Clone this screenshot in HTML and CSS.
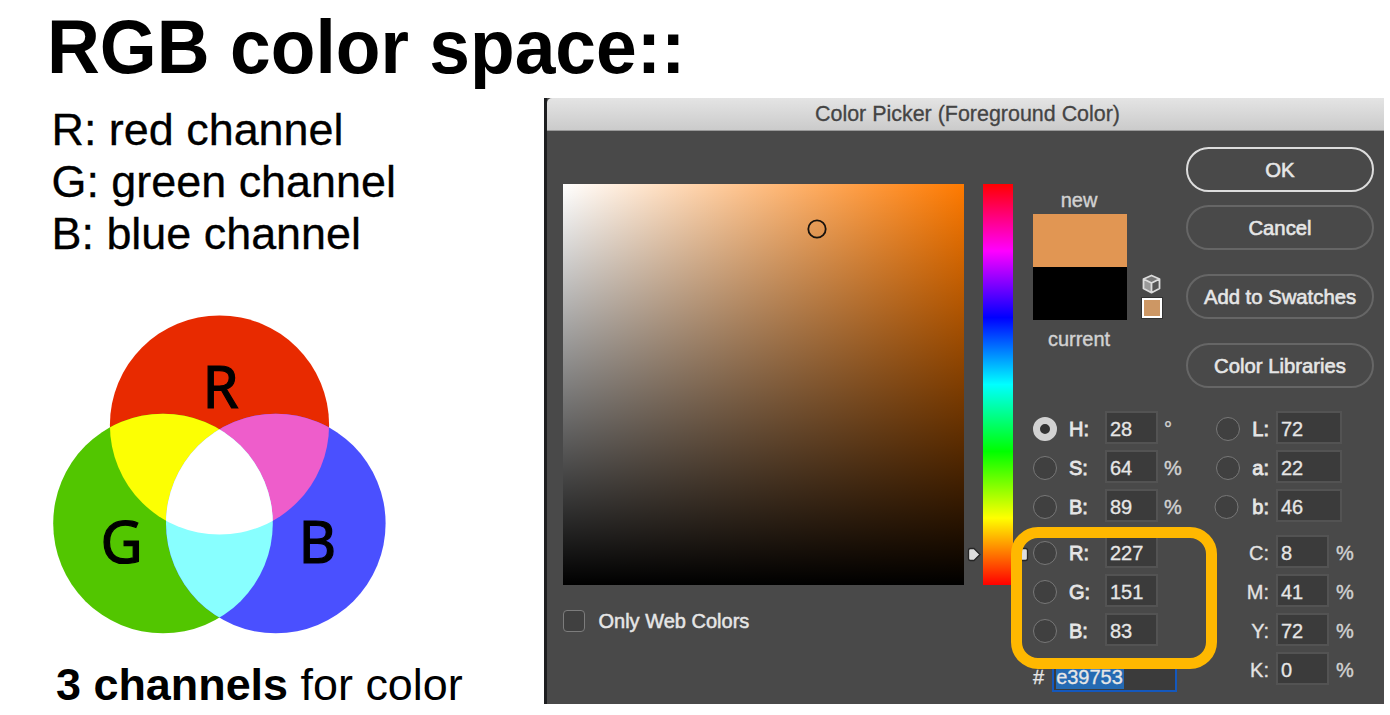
FILE: index.html
```html
<!DOCTYPE html>
<html lang="en">
<head>
<meta charset="utf-8">
<title>RGB color space</title>
<link rel="stylesheet" href="styles.css">
</head>
<body>
<main class="slide">
  <h1 class="title">RGB color space::</h1>

  <section class="notes">
    <ul class="channels">
      <li>R: red channel</li>
      <li>G: green channel</li>
      <li>B: blue channel</li>
    </ul>
    <svg class="venn" width="360" height="350" viewBox="40 300 360 350">
      <defs>
        <clipPath id="in-red"><circle cx="219.5" cy="425" r="109.6"/></clipPath>
        <clipPath id="in-green"><circle cx="163" cy="523.5" r="109.8"/></clipPath>
      </defs>
      <circle cx="219.5" cy="425" r="109.6" fill="#e82a00"/>
      <circle cx="163" cy="523.5" r="109.8" fill="#52c600"/>
      <circle cx="275.8" cy="523.5" r="109.8" fill="#4a50ff"/>
      <circle cx="163" cy="523.5" r="109.8" fill="#fcff03" clip-path="url(#in-red)"/>
      <circle cx="275.8" cy="523.5" r="109.8" fill="#ee5dcb" clip-path="url(#in-red)"/>
      <g clip-path="url(#in-green)">
        <circle cx="275.8" cy="523.5" r="109.8" fill="#88ffff"/>
        <g clip-path="url(#in-red)"><circle cx="275.8" cy="523.5" r="109.8" fill="#fff"/></g>
      </g>
      <text class="venn-label" x="202.5" y="408">R</text>
      <text class="venn-label" x="100.5" y="562.5">G</text>
      <text class="venn-label" x="298.5" y="562.5">B</text>
    </svg>
    <p class="caption"><b>3 channels</b> for color</p>
  </section>

  <section class="picker">
    <header class="picker-bar">Color Picker (Foreground Color)</header>
    <div class="picker-body">
      <div class="field-col">
        <div class="field">
          <svg class="ring" width="20" height="20" viewBox="0 0 20 20"><circle cx="10" cy="10" r="8.7" fill="none" stroke="#17120d" stroke-width="1.8"/></svg>
        </div>
        <div class="web-only"><span class="checkbox"></span>Only Web Colors</div>
      </div>
      <div class="hue">
        <svg class="arrow arrow-left" width="15" height="15" viewBox="0 0 15 15"><path d="M3.500 1.500h3.500l6 6-6 6H3.500q-2 0-2-2v-8q0-2 2-2z" fill="#dedede" stroke="#262626" stroke-width="1.300"/></svg>
        <svg class="arrow arrow-right" width="15" height="15" viewBox="0 0 15 15"><path d="M11.500 1.500H8l-6 6 6 6h3.500q2 0 2-2v-8q0-2-2-2z" fill="#dedede" stroke="#262626" stroke-width="1.300"/></svg>
      </div>
      <div class="side">
        <div class="side-top">
          <div class="preview">
            <span>new</span>
            <div class="swatch-new"></div>
            <div class="swatch-current"></div>
            <span class="current-label">current</span>
          </div>
          <div class="websafe">
            <svg width="20" height="20" viewBox="0 0 20 20"><path d="M9.500 1.500l8 3.500v9.500l-8 4.200-8-4.200V5z" fill="#777"/><path d="M9.500 9l8-4v9.500l-8 4.200z" fill="#555"/><path d="M1.500 5l8 4v9.700l-8-4.200z" fill="#999"/><path d="M9.500 1.500l8 3.500v9.500l-8 4.200-8-4.200V5zM1.500 5l8 4 8-4M9.500 9v9.700" fill="none" stroke="#dcdcdc" stroke-width="1.800" stroke-linejoin="round"/></svg>
            <span class="websafe-chip"></span>
          </div>
          <div class="buttons">
            <div class="btn primary">OK</div>
            <div class="btn">Cancel</div>
            <div class="btn spaced">Add to Swatches</div>
            <div class="btn spaced">Color Libraries</div>
          </div>
        </div>
        <div class="values">
          <div class="group left">
            <div class="row"><i class="radio on"></i><b>H:</b><span class="box">28</span><em>°</em></div>
            <div class="row"><i class="radio"></i><b>S:</b><span class="box">64</span><em>%</em></div>
            <div class="row"><i class="radio"></i><b>B:</b><span class="box">89</span><em>%</em></div>
            <div class="row split"><i class="radio"></i><b>R:</b><span class="box">227</span></div>
            <div class="row"><i class="radio"></i><b>G:</b><span class="box">151</span></div>
            <div class="row"><i class="radio"></i><b>B:</b><span class="box">83</span></div>
            <div class="hex"><span>#</span><span class="hex-box"><mark>e39753</mark></span></div>
            <div class="highlight"></div>
          </div>
          <div class="group right">
            <div class="row"><i class="radio"></i><b>L:</b><span class="box wide">72</span></div>
            <div class="row"><i class="radio"></i><b>a:</b><span class="box wide">22</span></div>
            <div class="row"><i class="radio nudge"></i><b>b:</b><span class="box wide">46</span></div>
            <div class="row split"><i></i><b class="plain">C:</b><span class="box">8</span><em>%</em></div>
            <div class="row"><i></i><b class="plain">M:</b><span class="box">41</span><em>%</em></div>
            <div class="row"><i></i><b class="plain">Y:</b><span class="box">72</span><em>%</em></div>
            <div class="row"><i></i><b class="plain">K:</b><span class="box">0</span><em>%</em></div>
          </div>
        </div>
      </div>
    </div>
  </section>
</main>
</body>
</html>
```
FILE: styles.css
```css
* { box-sizing: border-box; }
body {
  margin: 0;
  background: #fff;
  color: #000;
  font-family: "Liberation Sans", Arial, sans-serif;
}
.slide {
  display: grid;
  grid-template-columns: 544px 840px;
  grid-template-rows: 98px 606px;
  width: 1390px;
  height: 715px;
  overflow: hidden;
}
.title {
  grid-column: 1 / 3;
  margin: 0;
  padding: 6px 0 0 47px;
  font-size: 73.200px;
  line-height: 84px;
  white-space: nowrap;
  transform: scaleY(1.03);
  transform-origin: 0 73px;
}
.notes { padding-top: 5.500px; }
.channels {
  margin: 0;
  padding: 0 0 0 51.500px;
  list-style: none;
  font-size: 44.900px;
  line-height: 52px;
  -webkit-text-stroke: .3px #000;
}
.venn { display: block; margin: 40.500px 0 0 40px; }
.venn-label { font: 58px "Noto Sans", sans-serif; stroke: #000; stroke-width: 1.200px; }
.caption {
  margin: 8.500px 0 0 56px;
  font-size: 44.900px;
  line-height: 52px;
  white-space: nowrap;
}

.picker {
  height: 606px;
  border-left: 3px solid #1d1e20;
  background: #494949;
  color: #e6e6e6;
  font-size: 20px;
}
.picker-bar {
  height: 33px;
  padding-left: 4px;
  border-bottom: 1px solid #999;
  border-radius: 5px 0 0 0;
  background: linear-gradient(#e4e4e4, #cbcbcb);
  color: #444;
  font-size: 21.450px;
  line-height: 33px;
  text-align: center;
  -webkit-text-stroke: .3px #444;
}
.picker-body { display: flex; padding: 16px 0 0 16px; height: 573px; }
.field-col { width: 401px; padding-top: 37px; }
.field {
  position: relative;
  height: 401px;
  background: linear-gradient(transparent, #000), linear-gradient(90deg, #fff, #ff7a00);
}
.ring { position: absolute; left: 244px; top: 35px; }
.web-only {
  display: flex;
  align-items: center;
  gap: 13.500px;
  margin-top: 25px;
  height: 22px;
  padding-top: 1px;
  -webkit-text-stroke: .5px #e6e6e6;
}
.checkbox { width: 22px; height: 22px; margin-top: -1px; border: 1.500px solid #7c7c7c; border-radius: 4px; background: #404040; }
.hue {
  position: relative;
  width: 30px;
  height: 401px;
  margin: 37px 20px 0 19px;
  background: linear-gradient(#f00, #f0f 16.700%, #00f 33.300%, #0ff 50%, #0f0 66.700%, #ff0 83.300%, #f00);
}
.arrow { position: absolute; top: 363px; }
.arrow-left { left: -16px; }
.arrow-right { left: 31px; }

.side { width: 342px; }
.side-top { display: flex; height: 264px; }
.preview { width: 94px; padding-top: 41px; text-align: center; line-height: 24px; color: #d2d2d2; }
.preview span { display: block; height: 26px; margin-left: -2px; -webkit-text-stroke: .4px #d2d2d2; }
.swatch-new { height: 53px; background: #e19653; }
.swatch-current { height: 53px; background: #000; }
.preview .current-label { padding-top: 7px; }
.websafe { display: flex; flex-direction: column; width: 20px; margin: 127px 24.500px 0 15px; gap: 4px; }
.websafe-chip { width: 20px; height: 20px; border: 2px solid #fff; outline: 1px solid #333; background: #cd9764; }
.buttons { display: flex; flex-direction: column; width: 188px; margin-left: -.500px; }
.btn {
  height: 45px;
  margin-bottom: 13.300px;
  border: 2px solid #666;
  border-radius: 23px;
  line-height: 42px;
  font-size: 20.300px;
  text-align: center;
  -webkit-text-stroke: .6px #e6e6e6;
}
.btn.primary { border-color: #ddd; }
.btn.spaced { margin-top: 10.500px; }

.values { display: flex; }
.group { position: relative; display: flex; flex-direction: column; }
.group.left { width: 182px; }
.row { display: grid; height: 39px; align-items: start; line-height: 37px; }
.left .row { grid-template-columns: 36px 36px 59px 40px; }
.right .row { grid-template-columns: 24px 30px 60px 20px; justify-content: start; }
.row.split { margin-top: 7px; }
.row b { font-weight: 400; -webkit-text-stroke: .8px #e6e6e6; }
.row b.plain { -webkit-text-stroke: .4px #d8d8d8; }
.right .row b { text-align: right; }
.right .box { margin-left: 7px; }
.row em { font-style: normal; color: #d2d2d2; -webkit-text-stroke: .4px #d2d2d2; }
.right .row em { margin-left: 7px; }
.radio {
  width: 24px;
  height: 24px;
  margin-top: 6px;
  border: 1.500px solid #777;
  border-radius: 50%;
  background: #404040;
}
.radio.on { border: 7px solid #d2d2d2; background: #333; }
.right .radio { transform: translateX(1px); }
.right .radio.nudge { transform: translateX(-.500px); }
.box {
  width: 53px;
  height: 33px;
  padding-left: 3px;
  border: 2px solid #535353;
  background: #3b3b3b;
  line-height: 33px;
  -webkit-text-stroke: .3px #e6e6e6;
}
.box.wide { width: 66px; }
.hex { display: flex; height: 33px; margin-top: 7px; gap: 8px; line-height: 36px; -webkit-text-stroke: .3px #e6e6e6; }
.hex-box { width: 125px; border: 2px solid #1458bd; background: #3b3b3b; padding: 3px 0 0 2px; line-height: 0; }
.hex-box mark { display: inline-block; height: 25px; padding-right: 1px; background: #246ab3; color: #e6e6e6; line-height: 27px; }
/* Emphasis frame drawn over the RGB rows */
.highlight {
  position: absolute;
  left: -22px;
  top: 116px;
  width: 206px;
  height: 142px;
  border: 11px solid #ffb800;
  border-radius: 27px;
}
```
